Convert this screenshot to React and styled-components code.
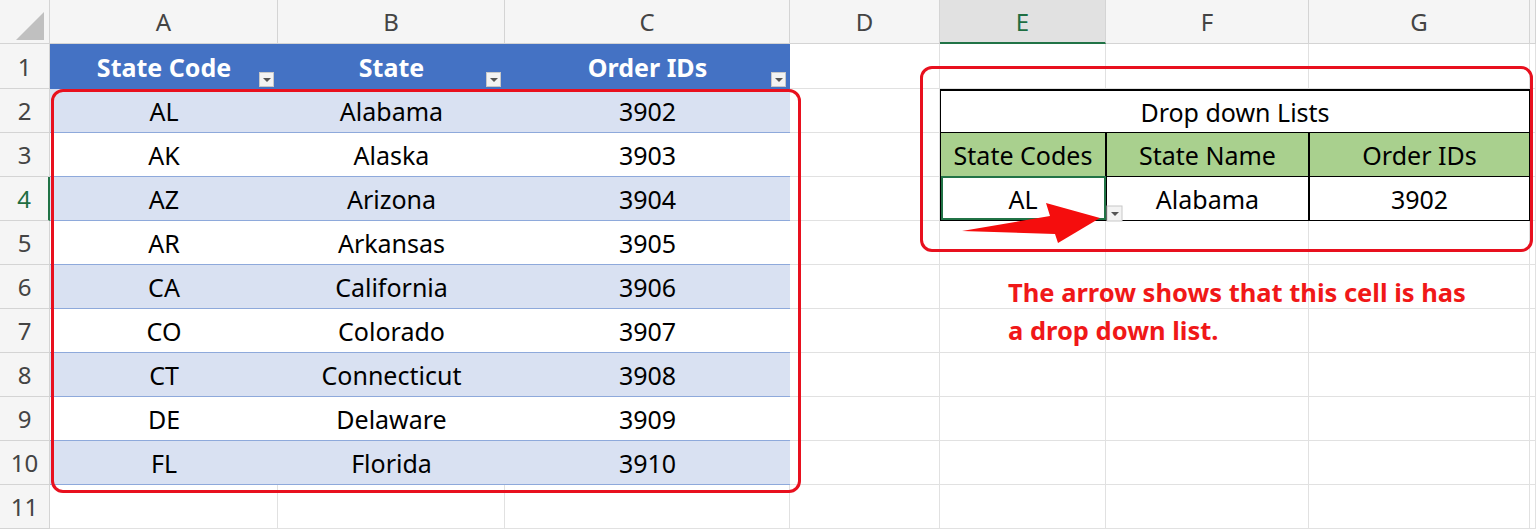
import React from 'react';
import styled, { createGlobalStyle, css } from 'styled-components';

const Global = createGlobalStyle`
  html, body { margin: 0; background: #fff; overflow: hidden; }
  body { font-family: "Noto Sans", "Open Sans", sans-serif; }
`;

const cols = [50, 228, 227, 285, 150, 166, 203, 221, 6];
const letters = ['A', 'B', 'C', 'D', 'E', 'F', 'G', ''];
const data = [
  ['AL', 'Alabama', '3902'], ['AK', 'Alaska', '3903'], ['AZ', 'Arizona', '3904'],
  ['AR', 'Arkansas', '3905'], ['CA', 'California', '3906'], ['CO', 'Colorado', '3907'],
  ['CT', 'Connecticut', '3908'], ['DE', 'Delaware', '3909'], ['FL', 'Florida', '3910'],
];

const Sheet = styled.div`
  position: relative;
  display: grid;
  grid-template-columns: ${cols.map((c) => c + 'px').join(' ')};
  grid-template-rows: 44px 45px repeat(10, 44px);
  width: 1536px;
  height: 529px;
`;

const Cell = styled.div`
  box-sizing: border-box;
  display: flex;
  align-items: center;
  justify-content: center;
  position: relative;
  font-size: 25px;
  color: #000;
  border-right: 1px solid #e1e1e1;
  border-bottom: 1px solid #e1e1e1;
  white-space: nowrap;
  ${(p) => p.$head && css`
    background: #f5f5f5;
    color: #444;
    font-size: 24px;
    border-color: #d4d4d4;
  `}
  ${(p) => p.$sel && css`
    background: #e1e1e1;
    color: #1e6e42;
    border-bottom: 2px solid #217346;
  `}
  ${(p) => p.$selRow && css`
    color: #1e6e42;
    border-right: 2px solid #217346;
  `}
  ${(p) => p.$blue && css`
    background: #4472c4;
    color: #fff;
    font-weight: 700;
    border-right: none;
    border-bottom: none;
  `}
  ${(p) => p.$band !== undefined && css`
    background: ${p.$band ? '#d9e1f2' : '#fff'};
    border-right: none;
    border-bottom: 1px solid #8ea9db;
  `}
  ${(p) => p.$green && css`
    background: #a9d08e;
    border: 1px solid #000;
    border-top: none;
  `}
  ${(p) => p.$boxed && css`
    border: 1px solid #000;
    border-top: none;
  `}
`;

const Title = styled(Cell)`
  grid-column: span 3;
  border: 1px solid #000;
  border-top: 2px solid #000;
`;

const FilterBtn = styled.span`
  position: absolute;
  right: 4px;
  bottom: 2px;
  width: 15px;
  height: 15px;
  box-sizing: border-box;
  background: #f3f3f3;
  border: 1px solid #c8c8c8;
  &::after {
    content: '';
    position: absolute;
    left: 3px;
    top: 5px;
    border: 4px solid transparent;
    border-top: 4px solid #555;
  }
`;

const Active = styled.span`
  position: absolute;
  inset: -1px -1px 0 0;
  border: 2px solid #217346;
  pointer-events: none;
`;

const Corner = styled.span`
  position: absolute;
  left: 0;
  top: 0;
  width: 0;
  height: 0;
  border-left: 28px solid transparent;
  border-bottom: 28px solid #c0c0c0;
  margin: 12px 0 0 16px;
`;

const RedBox = styled.div`
  position: absolute;
  border: 3px solid #e8101e;
  border-radius: 12px;
  pointer-events: none;
`;

const Note = styled.div`
  position: absolute;
  left: 1008px;
  top: 273px;
  color: #f01818;
  font-weight: 700;
  font-size: 25.5px;
  line-height: 38px;
`;

export default function App() {
  const cells = [];
  cells.push(<Cell key="c" $head><Corner /></Cell>);
  letters.forEach((l, i) => cells.push(<Cell key={'h' + i} $head $sel={l === 'E'}>{l}</Cell>));
  for (let r = 1; r <= 11; r++) {
    cells.push(<Cell key={'r' + r} $head $selRow={r === 4}>{r}</Cell>);
    for (let c = 0; c < 8; c++) {
      const k = r + '-' + c;
      if (r === 1 && c < 3) {
        cells.push(<Cell key={k} $blue>{['State Code', 'State', 'Order IDs'][c]}<FilterBtn /></Cell>);
      } else if (r >= 2 && r <= 10 && c < 3) {
        cells.push(<Cell key={k} $band={r % 2 === 0}>{data[r - 2][c]}</Cell>);
      } else if (r === 2 && c === 4) {
        cells.push(<Title key={k}>Drop down Lists</Title>);
      } else if (r === 2 && (c === 5 || c === 6)) {
        continue;
      } else if (r === 3 && c >= 4 && c <= 6) {
        cells.push(<Cell key={k} $green>{['State Codes', 'State Name', 'Order IDs'][c - 4]}</Cell>);
      } else if (r === 4 && c >= 4 && c <= 6) {
        cells.push(
          <Cell key={k} $boxed>
            {['AL', 'Alabama', '3902'][c - 4]}
            {c === 4 && <Active />}
          </Cell>
        );
      } else {
        cells.push(<Cell key={k} />);
      }
    }
  }
  return (
    <>
      <Global />
      <Sheet>
        {cells}
        <RedBox style={{ left: 51, top: 89, width: 744, height: 398 }} />
        <RedBox style={{ left: 920, top: 66, width: 607, height: 180 }} />
        <svg width="1536" height="529" style={{ position: 'absolute', left: 0, top: 0, pointerEvents: 'none' }}>
          <rect x="1107" y="206" width="15" height="15" fill="#f3f3f3" stroke="#c8c8c8" />
          <path d="M1111 212 l4 4 l4 -4z" fill="#555" />
          <path d="M962 231 L1050 216 L1046 203 L1100 218 L1058 243 L1055 234 Z" fill="#f50d0d" />
        </svg>
        <Note>The arrow shows that this cell is has<br />a drop down list.</Note>
      </Sheet>
    </>
  );
}
